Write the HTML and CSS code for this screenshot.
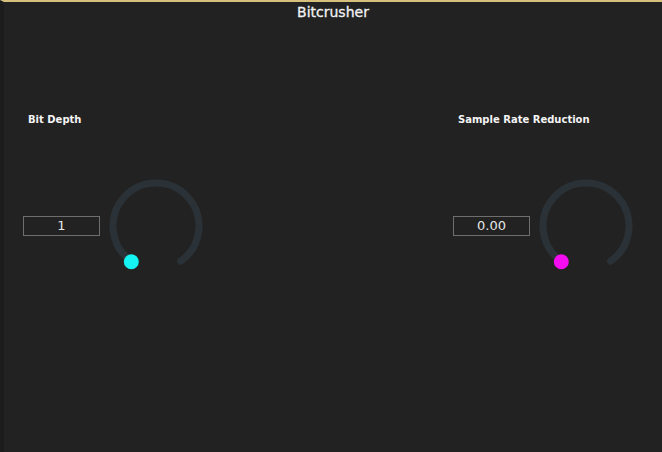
FILE: index.html
```html
<!DOCTYPE html>
<html>
<head>
<meta charset="utf-8">
<link rel="stylesheet" href="styles.css">
</head>
<body>
<div class="app">
  <div class="title">Bitcrusher</div>
  <div class="panels">
    <div class="panel">
      <div class="label">Bit Depth</div>
      <div class="row">
        <div class="valuebox">1</div>
        <svg class="knob" width="104" height="104" viewBox="0 0 104 104">
          <path d="M27.34 87.22 A43 43 0 1 1 76.66 87.22" fill="none" stroke="#2a3237" stroke-width="7" stroke-linecap="round"/>
          <circle cx="27.3" cy="87.8" r="7.5" fill="#14f2f2"/>
        </svg>
      </div>
    </div>
    <div class="panel">
      <div class="label">Sample Rate Reduction</div>
      <div class="row">
        <div class="valuebox">0.00</div>
        <svg class="knob" width="104" height="104" viewBox="0 0 104 104">
          <path d="M27.34 87.22 A43 43 0 1 1 76.66 87.22" fill="none" stroke="#2a3237" stroke-width="7" stroke-linecap="round"/>
          <circle cx="27.3" cy="87.8" r="7.5" fill="#f50cf0"/>
        </svg>
      </div>
    </div>
  </div>
</div>
</body>
</html>
```
FILE: styles.css
```css
html, body {
  margin: 0;
  padding: 0;
  background: #222222;
}
.app {
  width: 662px;
  height: 452px;
  box-sizing: border-box;
  border-top: 2px solid #d6c07c;
  border-left: 4px solid #1c1c1d;
  background: #222222;
  font-family: "DejaVu Sans", sans-serif;
  color: #f2f2f2;
}
.title {
  height: 20px;
  line-height: 20px;
  font-size: 14px;
  text-align: center;
  -webkit-text-stroke: 0.3px #f2f2f2;
}
.panels {
  display: flex;
  justify-content: space-between;
  padding: 0 24px 0 19px;
}
.panel {
  display: flex;
  flex-direction: column;
}
.label {
  margin-top: 91px;
  padding-left: 5px;
  font-size: 10px;
  font-weight: bold;
  line-height: 14px;
  color: #f4f4f4;
}
.row {
  margin-top: 47px;
  display: flex;
  align-items: center;
  gap: 4px;
}
.valuebox {
  width: 77px;
  height: 20px;
  box-sizing: border-box;
  border: 1px solid #6e6e6e;
  font-size: 13px;
  line-height: 18px;
  text-align: center;
  color: #e6e6e6;
}
.knob {
  display: block;
}
```
